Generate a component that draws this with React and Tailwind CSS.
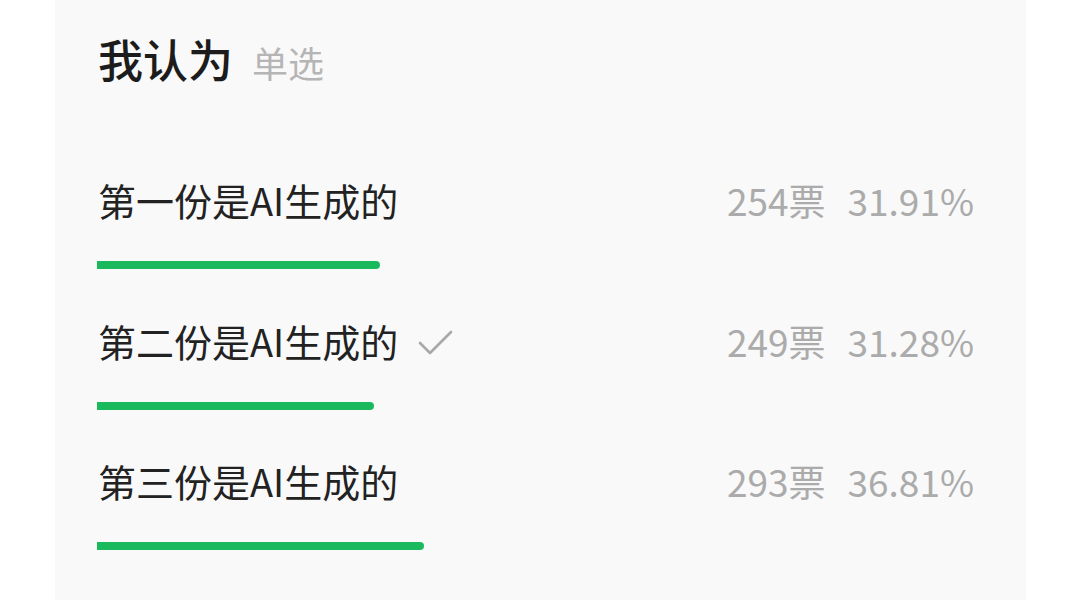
import React from "react";

const options = [
  { label: "第一份是AI生成的", votes: 254, pct: 31.91, checked: false },
  { label: "第二份是AI生成的", votes: 249, pct: 31.28, checked: true },
  { label: "第三份是AI生成的", votes: 293, pct: 36.81, checked: false },
];

function Check() {
  return (
    <svg width="36" height="28" viewBox="0 0 36 28" className="ml-[19px] mt-[4px]" fill="none">
      <polyline points="3,14 13,24 34,3" stroke="#a8a8a8" strokeWidth="2.6" strokeLinecap="round" strokeLinejoin="round" />
    </svg>
  );
}

export default function App() {
  return (
    <div
      className="w-[1080px] h-[600px] bg-white overflow-hidden"
      style={{ fontFamily: '"Noto Sans CJK SC", "Noto Sans", sans-serif' }}
    >
      <div className="ml-[55px] w-[971px] h-full bg-[#f9f9f9] pl-[43px] pr-[52px] pt-[30px]">
        <div className="flex items-baseline">
          <span className="text-[45px] leading-[58px] font-medium text-[#1c1c1c]">我认为</span>
          <span className="ml-[19px] text-[36px] text-[#b5b5b5]">单选</span>
        </div>
        <div className="mt-[86px] flex flex-col">
          {options.map((o, i) => (
            <div key={i} className="h-[140.5px] flex flex-col">
              <div className="flex items-center h-[50px]">
                <span className="text-[38px] leading-[50px] text-[#222222]">{o.label}</span>
                {o.checked && <Check />}
                <span className="ml-auto text-[37px] leading-[50px] text-[#ababab]">{o.votes}票</span>
                <span className="ml-[22px] text-[37px] leading-[50px] text-[#ababab]">{o.pct.toFixed(2)}%</span>
              </div>
              <div className="mt-[36px] w-[887px] -ml-[1px] h-[8px]">
                <div className="h-full rounded-r-full rounded-l-[2px] bg-[#1bb95d]" style={{ width: `${o.pct}%` }} />
              </div>
            </div>
          ))}
        </div>
      </div>
    </div>
  );
}
